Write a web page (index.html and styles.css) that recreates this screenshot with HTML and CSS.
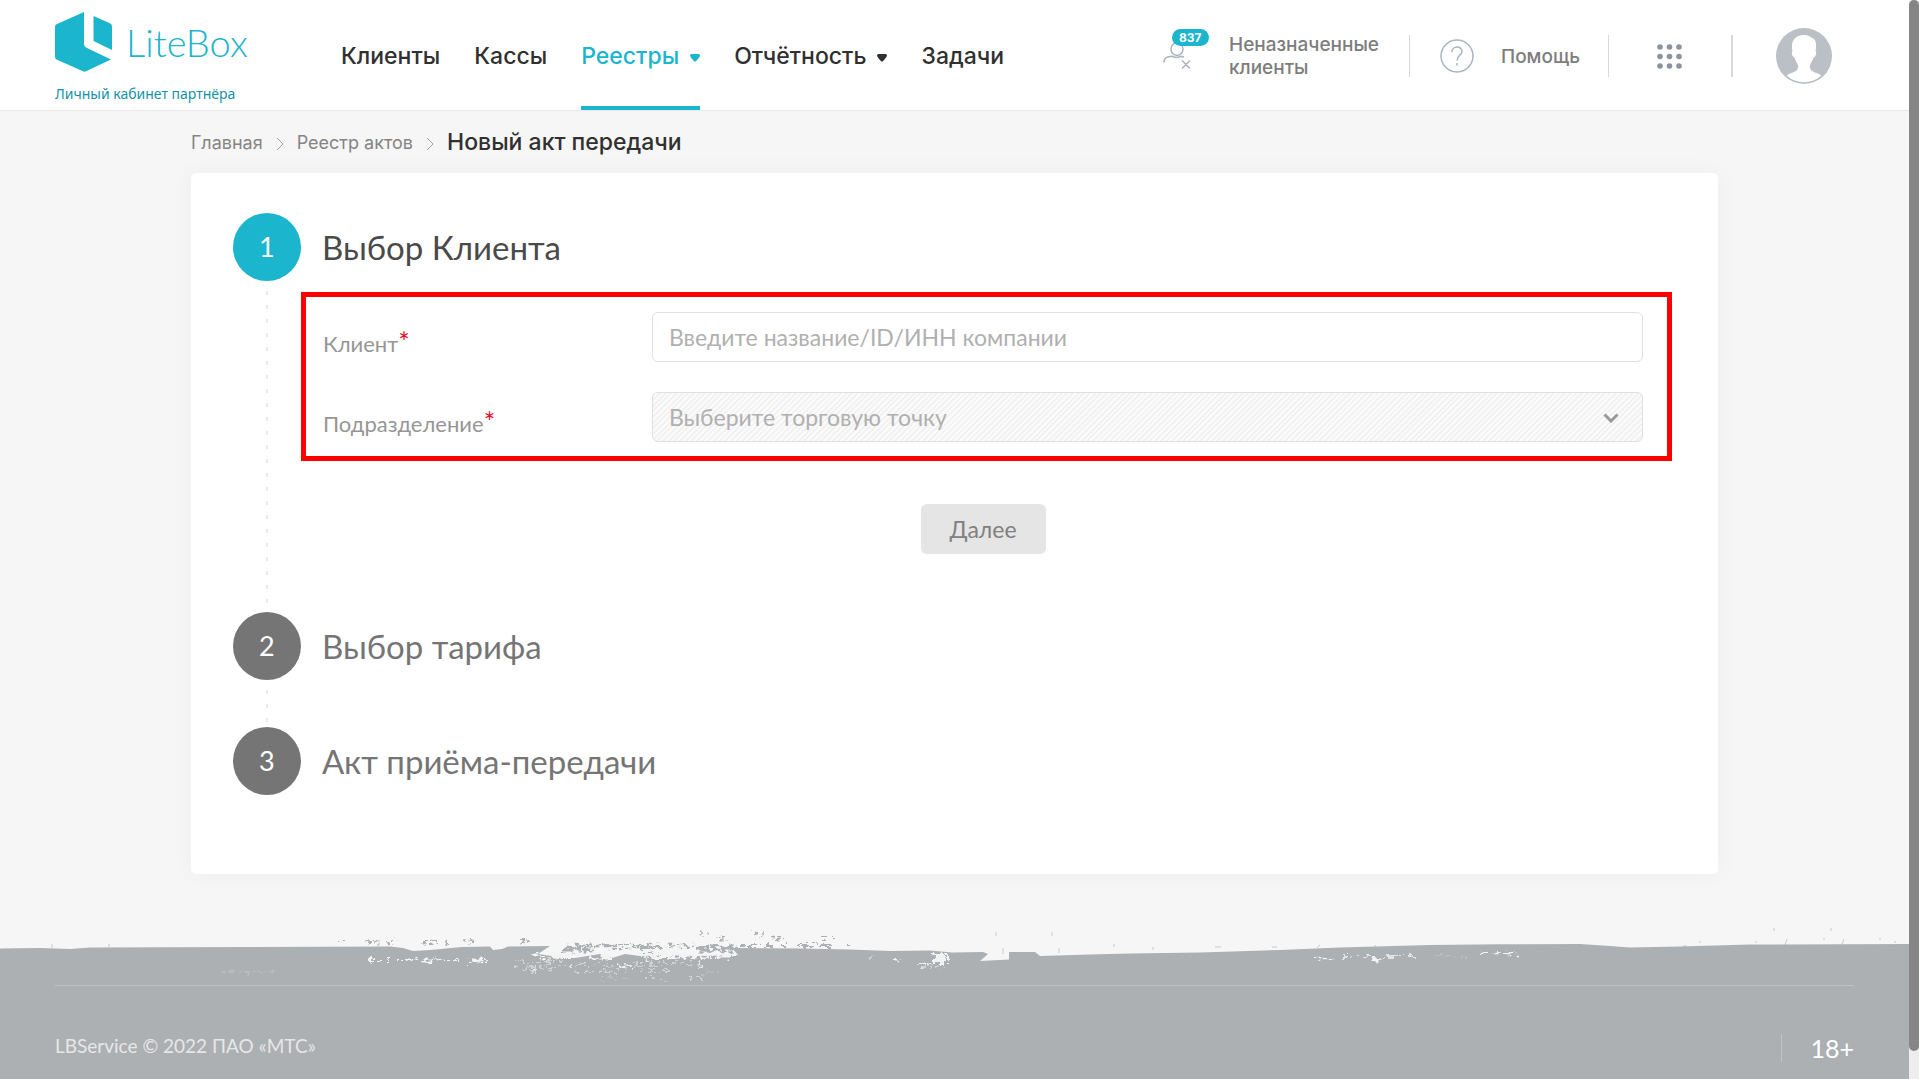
FILE: index.html
```html
<!DOCTYPE html>
<html lang="ru">
<head>
<meta charset="utf-8">
<meta name="viewport" content="width=device-width, initial-scale=1">
<title>Новый акт передачи</title>
<link rel="stylesheet" href="styles.css">
</head>
<body>
<header class="header">
  <a class="brand" href="#">
    <span class="brand-row">
      <svg class="brand-mark" viewBox="0 0 57 60" aria-hidden="true">
        <path d="M29 0V32Q29 34.500 31 35.500L56 47.500 31 59.300Q29.500 60 28 59.300L1.500 47.500Q0 46.500 0 45V14.500Q0 13 1.500 12.300Z"/>
        <path d="M38.500 4L55 11.300Q57 12.300 57 14.500V38L38.500 29Z"/>
      </svg>
      <span class="brand-name">LiteBox</span>
    </span>
    <span class="brand-tag">Личный кабинет партнёра</span>
  </a>
  <nav class="nav">
    <a class="nav-link" href="#">Клиенты</a>
    <a class="nav-link" href="#">Кассы</a>
    <a class="nav-link nav-link-active" href="#">Реестры
      <svg class="nav-arrow" viewBox="0 0 10 8" aria-hidden="true"><path d="M1.500 0h7Q10 0 10 1.500 10 2.500 6.200 7 5 8 3.800 7 0 2.500 0 1.500 0 0 1.500 0Z"/></svg></a>
    <a class="nav-link" href="#">Отчётность
      <svg class="nav-arrow" viewBox="0 0 10 8" aria-hidden="true"><path d="M1.500 0h7Q10 0 10 1.500 10 2.500 6.200 7 5 8 3.800 7 0 2.500 0 1.500 0 0 1.500 0Z"/></svg></a>
    <a class="nav-link" href="#">Задачи</a>
  </nav>
  <div class="tools">
    <a class="tool tool-clients" href="#">
      <span class="clients-icon">
        <svg viewBox="0 0 28 28" aria-hidden="true"><ellipse cx="14" cy="7" rx="6" ry="6.500"/><path d="M1 20.500C1 15 5 14.500 9 14.200 11 15.800 16 15.800 18 14.200L21 15M19 18.500l8 8M27 18.500l-8 8"/></svg>
        <span class="badge">837</span>
      </span>
      <span class="clients-text">Неназначенные клиенты</span>
    </a>
    <a class="tool tool-help" href="#">
      <svg class="help-icon" viewBox="0 0 34 34" aria-hidden="true"><circle cx="17" cy="17" r="16"/><path d="M12 13C12 6.500 22 6.500 22 12.500 22 16 17 16.500 17 21.500M17 24v2.500"/></svg>
      Помощь
    </a>
    <button class="tool tool-apps" type="button" aria-label="Приложения">
      <svg class="apps-icon" viewBox="0 0 25 25" aria-hidden="true"><circle cx="3" cy="3" r="2.800"/><circle cx="12.500" cy="3" r="2.800"/><circle cx="22" cy="3" r="2.800"/><circle cx="3" cy="12.500" r="2.800"/><circle cx="12.500" cy="12.500" r="2.800"/><circle cx="22" cy="12.500" r="2.800"/><circle cx="3" cy="22" r="2.800"/><circle cx="12.500" cy="22" r="2.800"/><circle cx="22" cy="22" r="2.800"/></svg>
    </button>
    <button class="tool tool-user" type="button" aria-label="Профиль">
      <svg class="avatar" viewBox="0 0 56 56" aria-hidden="true">
        <circle cx="28" cy="28" r="28" fill="#bbc0c7"/>
        <path d="M28 7C20 7 15.500 12 16 19 16 21 16.300 22 16.500 23 15 24 16 29 18.500 29.500 19.500 33.500 21.500 35 22 37.500 22.500 42 20 43.500 17 44.500 14 45.500 12.500 46 10.800 47.700A26.200 26.200 0 0 0 45.200 47.700C43.500 46 42 45.500 39 44.500 36 43.500 33.500 42 34 37.500 34.500 35 36.500 33.500 37.500 29.500 40 29 41 24 39.500 23 39.700 22 40 21 40 19 40.500 15 39 10 36 10 34 8 31 7 28 7Z" fill="#fff"/>
      </svg>
    </button>
  </div>
</header>

<main class="main">
  <nav class="crumbs" aria-label="Навигация">
    <a class="crumb" href="#">Главная</a>
    <svg class="crumb-sep" viewBox="0 0 8 14" aria-hidden="true"><path d="M1 1l6 6-6 6"/></svg>
    <a class="crumb" href="#">Реестр актов</a>
    <svg class="crumb-sep" viewBox="0 0 8 14" aria-hidden="true"><path d="M1 1l6 6-6 6"/></svg>
    <h1 class="crumb-title">Новый акт передачи</h1>
  </nav>
  <form class="card">
    <section class="step step-current">
      <div class="step-rail"><span class="step-num">1</span><span class="step-line"></span></div>
      <div class="step-body">
        <h2 class="step-title">Выбор Клиента</h2>
        <fieldset class="fields">
          <div class="field">
            <label class="label" for="client">Клиент<span class="req">*</span></label>
            <input class="control" id="client" type="text" placeholder="Введите название/ID/ИНН компании">
          </div>
          <div class="field">
            <label class="label" for="unit">Подразделение<span class="req">*</span></label>
            <div class="select-box">
              <select class="control control-select" id="unit" disabled><option>Выберите торговую точку</option></select>
              <svg class="select-arrow" viewBox="0 0 16 10" aria-hidden="true"><path d="M1.500 1.500L8 8l6.500-6.500"/></svg>
            </div>
          </div>
        </fieldset>
        <div class="actions"><button class="next" type="button">Далее</button></div>
      </div>
    </section>
    <section class="step">
      <div class="step-rail"><span class="step-num">2</span><span class="step-line"></span></div>
      <div class="step-body"><h2 class="step-title">Выбор тарифа</h2></div>
    </section>
    <section class="step">
      <div class="step-rail"><span class="step-num">3</span></div>
      <div class="step-body"><h2 class="step-title">Акт приёма-передачи</h2></div>
    </section>
  </form>
</main>

<footer class="footer">
  <svg class="brush" viewBox="0 0 1909 65" preserveAspectRatio="none" aria-hidden="true">
    <filter id="rough" filterUnits="userSpaceOnUse" x="0" y="0" width="1909" height="65">
      <feTurbulence type="fractalNoise" baseFrequency="0.150 0.250" numOctaves="2" seed="4"/>
      <feDisplacementMap in="SourceGraphic" scale="12" xChannelSelector="R" yChannelSelector="G"/>
    </filter>
    <path fill="#acb0b3" d="M0 28.500L40 28 70 29 90 27.500 250 27 390 26.500 403 28 413 31 430 30 462 27 490 26.500 493 30 502 29 508 26.500 550 26 538 34 552 36 555 38 575 38 600 34 612 38 625 34 640 36 665 35 698 36 738 35 732 28 800 28.500 850 29.500 890 31 930 30.500 952 32.500 983 32 988 34 980 41 1009 39.500 1009 32 1035 32 1040 36 1090 34.500 1130 33.500 1200 32.500 1280 30 1340 27.500 1430 25 1500 24.200 1580 24 1610 26 1630 27.500 1680 26.500 1750 24.500 1909 24V65H0Z"/>
    <g fill="none" stroke="#acb0b3" filter="url(#rough)">
      <path stroke-width="2.500" stroke-dasharray="7 2 12 3 3 2" d="M565 26h75M640 26h62M700 30h30M575 30h20"/>
      <path stroke-width="5" stroke-dasharray="13 2 6 3" d="M562 29h28M640 29h24M697 29h40"/>
      <path stroke-width="3" stroke-dasharray="4 2 12 4 10 9" d="M742 25.500h45M798 25.500h40M848 25.500h2"/>
      <path stroke-width="3" stroke-dasharray="3 3 6 9 3 200" d="M368 22h30M424 22h30M463 21h10M520 21h10M714 18h20M770 18h20"/>
      <path stroke-width="2" stroke-dasharray="6 4 2 100" d="M697 13.500h15M753 13.500h15M820 17h15M340 21h4"/>
    </g>
    <path fill="none" stroke="#acb0b3" stroke-opacity=".6" d="M52 24v4M109 24v3M996 12v4M1052 12v4M1003 28v6M1059 28v5M1114 24v3M1153 27v3M1215 27h6M1272 27h5M1317 28l3-3M1373 28l3-3M1774 8v3M1831 8v3M1785 25l2-6M1842 24l2-5M1700 21v2M1756 21v2M1824 18v2M1880 18v2M1895 21v2M1683 26h4"/>
    <g fill="none" stroke="#f2f3f3" filter="url(#rough)">
      <path stroke-width="1" stroke-dasharray="4 3 7 2 3 5" d="M362 40.500h40M440 41.500h30M513 42h50M515 48h43M530 51h8M570 45h70M575 52h50M640 44h60M640 51h30M645 58h20M690 58h16M870 36h8M915 46h30"/>
      <path stroke-width="3" stroke-dasharray="9 2 3 3 12 2" d="M404 40h38M472 40h14M534 37h25M588 38h22M650 37h46M700 36h36M618 46h16M893 41h6M917 44h20"/>
      <path stroke-width="6" stroke-dasharray="11 2 5 1" d="M550 35h34M602 36h12M640 33h55M934 40h17M934 36h17"/>
      <path stroke-width="1.500" d="M371 36v6M477 38l4 5M482 38l4 4M571 44v5M536 48v5M700 40v9M644 37l5 4M700 34l3 6M942 44l2 5"/>
      <path stroke-width="1.500" stroke-dasharray="10 3 5 4 16 3" d="M1317 38.500h20M1342 37h32M1372 38h14M1386 36h30M1480 33.500h38"/>
      <path stroke-width="3" d="M1372 39h10"/>
      <path stroke-opacity=".4" stroke-dasharray="4 3 7 2 3 5" d="M222 52h52M1438 36h30M700 53h20M600 58h30"/>
    </g>
  </svg>
  <div class="footer-in">
    <p class="copy">LBService © 2022 ПАО «МТС»</p>
    <p class="age">18+</p>
  </div>
</footer>
<div class="scroll" aria-hidden="true"><div class="scroll-thumb"></div></div>
</body>
</html>
```
FILE: styles.css
```css
* { box-sizing: border-box; }

body {
  margin: 0;
  padding-right: 10px;
  min-height: 100vh;
  display: flex;
  flex-direction: column;
  background: #f6f6f6;
  color: #303030;
  font-family: Lato, "Noto Sans", sans-serif;
  font-size: 22px;
}

a { color: inherit; text-decoration: none; }
h1, h2, p { margin: 0; font-weight: 400; }
button { border: 0; padding: 0; background: none; font: inherit; color: inherit; }
svg { display: block; flex: none; }

/* Header */
.header {
  display: flex;
  height: 111px;
  padding: 2px 77px 0 55px;
  background: #fff;
  border-bottom: 1px solid #e8e8e8;
  font-family: Inter, Roboto, sans-serif;
}
.brand { flex: none; width: 286px; padding-top: 10px; color: #1bb5cd; }
.brand-row { display: flex; align-items: center; gap: 14px; }
.brand-mark { width: 57px; height: 60px; fill: currentColor; }
.brand-name { font: 300 38px/60px Lato, sans-serif; }
.brand-tag { display: block; margin-top: 12px; font: 400 14px/20px "Noto Sans", sans-serif; color: #1592a6; }

.nav { display: flex; gap: 34px; font-size: 23px; font-weight: 500; }
.nav-link { display: flex; align-items: center; gap: 11px; white-space: nowrap; }
.nav-link-active { color: #1bb5cd; box-shadow: inset 0 -4px #1bb5cd; }
.nav-arrow { width: 10px; height: 8px; margin-top: 4px; fill: currentColor; }

.tools { display: flex; align-items: center; margin-left: auto; font-size: 19px; font-weight: 500; color: #7d7d7d; }
.tool { display: flex; align-items: center; height: 42px; }
.tool + .tool { border-left: 1px solid #d8d8d8; }
.clients-icon { position: relative; width: 66px; }
.clients-icon svg { width: 28px; height: 28px; fill: none; stroke: #a9b4c0; stroke-width: 1.5; }
.badge {
  position: absolute;
  left: 9px;
  top: -13px;
  padding: 0 7px;
  border-radius: 9px;
  background: #1bb5cd;
  color: #fff;
  font-size: 12px;
  font-weight: 700;
  line-height: 17px;
}
.clients-text { width: 180px; line-height: 23px; }
.tool-help { gap: 27px; width: 199px; padding-left: 30px; }
.help-icon { width: 34px; height: 34px; fill: none; stroke: #a9b4c0; stroke-width: 1.5; }
.tool-apps { width: 123px; padding-left: 48px; }
.apps-icon { width: 25px; height: 25px; fill: #8b939e; }
.tool.tool-user { padding-left: 43px; border-left: 2px solid #d8d8d8; }
.avatar { width: 56px; height: 56px; }

/* Page */
.main { width: 80%; margin: 0 auto; }
.crumbs {
  display: flex;
  align-items: center;
  gap: 13px;
  height: 62px;
  font-family: Inter, Roboto, sans-serif;
}
.crumb { font-size: 18px; color: #858585; }
.crumb-sep { width: 8px; height: 14px; margin-top: 4px; fill: none; stroke: #a0a0a0; }
.crumb-title { font-size: 23px; font-weight: 500; }

.card {
  padding: 40px 46px 79px 42px;
  border-radius: 5px;
  background: #fff;
  box-shadow: 0 0 24px rgba(0, 0, 0, .04);
}
.step { display: flex; color: #757575; }
.step-rail { display: flex; flex-direction: column; align-items: center; gap: 10px; width: 68px; }
.step-num {
  width: 68px;
  height: 68px;
  border-radius: 50%;
  background: #757575;
  color: #fff;
  font-size: 27px;
  line-height: 68px;
  text-align: center;
}
.step-current .step-num { background: #1bb5cd; }
.step-line {
  flex: 1;
  width: 2px;
  min-height: 37px;
  background: repeating-linear-gradient(#ebebeb 0 4px, transparent 4px 14px);
}
.step-body { flex: 1; min-width: 0; }
.step-title { padding-left: 21px; font-size: 33px; line-height: 68px; }
.step-current .step-title { color: #4a4a4a; }

.fields {
  display: grid;
  gap: 30px;
  margin: 11px 0 43px;
  padding: 15px 24px 14px 17px;
  border: 5px solid #f00;
}
.field { display: flex; }
.label { width: 329px; padding-top: 17px; line-height: 30px; color: #969696; }
.req { color: #e30b24; font-size: 27px; line-height: 20px; }
.control {
  flex: 1;
  width: 100%;
  min-width: 0;
  height: 50px;
  padding: 0 16px;
  border: 1px solid #e0e0e0;
  border-radius: 6px;
  background: #fff;
  color: #b0b0b0;
  font: 400 23px/30px Lato, "Noto Sans", sans-serif;
}
.control::placeholder { color: #b0b0b0; opacity: 1; }
.select-box { position: relative; flex: 1; }
.control-select {
  appearance: none;
  display: block;
  opacity: 1;
  background: repeating-linear-gradient(135deg, #f2f2f2 0 2px, #fbfbfb 2px 4px);
}
.select-arrow { position: absolute; right: 24px; top: 21px; width: 16px; height: 10px; fill: none; stroke: #999; stroke-width: 3; }
.actions { display: flex; justify-content: center; padding: 0 29px 58px 22px; }
.next {
  width: 125px;
  height: 50px;
  border-radius: 6px;
  background: #e5e5e5;
  color: #808080;
  font-size: 23px;
}

/* Footer */
.footer { flex: 1; margin-top: 46px; background: linear-gradient(transparent 64px, #acb0b3 64px); }
.brush { width: 100%; height: 65px; }
.footer-in {
  display: flex;
  justify-content: space-between;
  align-items: center;
  margin: 0 55px;
  padding: 48px 0 17px;
  border-top: 1px solid #bfc2c4;
  color: #e6e7e8;
}
.copy { font-size: 19px; line-height: 24px; padding-bottom: 4px; }
.age { padding-left: 28px; border-left: 1px solid #bfc2c4; color: #fff; font-size: 25px; line-height: 28px; }

/* Scroll indicator along the window edge */
.scroll { position: fixed; top: 0; right: 0; bottom: 0; width: 10px; background: #eee; }
.scroll-thumb { height: calc(100% - 28px); border-radius: 5px; background: #868686; }
```
